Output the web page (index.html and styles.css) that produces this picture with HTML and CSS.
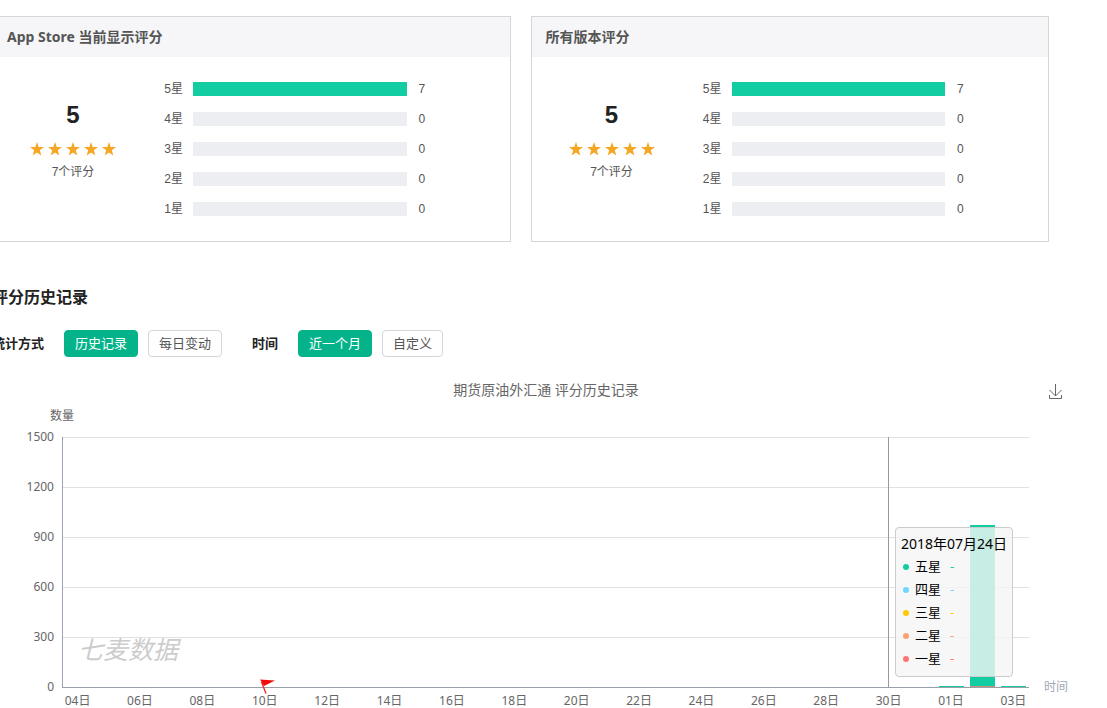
FILE: index.html
```
<!DOCTYPE html>
<html lang="zh-CN">
<head>
<meta charset="utf-8">
<title>评分历史记录</title>
<link rel="stylesheet" href="styles.css">
</head>
<body>
<svg class="sprite" aria-hidden="true">
  <symbol id="star" viewBox="0 0 14 14"><path d="M7 0L8.700 5H14L9.800 8.300L11.300 13.500L7 10.400L2.700 13.500L4.200 8.300L0 5H5.300Z"/></symbol>
</svg>
<main class="page">
  <div class="ratings">
    <section class="card">
      <h2 class="card-title">App Store 当前显示评分</h2>
      <div class="card-body">
        <div class="summary">
          <div class="score">5</div>
          <div class="stars" role="img" aria-label="5星">
            <svg><use href="#star"/></svg><svg><use href="#star"/></svg><svg><use href="#star"/></svg><svg><use href="#star"/></svg><svg><use href="#star"/></svg>
          </div>
          <div class="count">7个评分</div>
        </div>
        <ul class="levels">
          <li><span class="level">5星</span><span class="bar full"></span><span>7</span></li>
          <li><span class="level">4星</span><span class="bar"></span><span>0</span></li>
          <li><span class="level">3星</span><span class="bar"></span><span>0</span></li>
          <li><span class="level">2星</span><span class="bar"></span><span>0</span></li>
          <li><span class="level">1星</span><span class="bar"></span><span>0</span></li>
        </ul>
      </div>
    </section>
    <section class="card">
      <h2 class="card-title">所有版本评分</h2>
      <div class="card-body">
        <div class="summary">
          <div class="score">5</div>
          <div class="stars" role="img" aria-label="5星">
            <svg><use href="#star"/></svg><svg><use href="#star"/></svg><svg><use href="#star"/></svg><svg><use href="#star"/></svg><svg><use href="#star"/></svg>
          </div>
          <div class="count">7个评分</div>
        </div>
        <ul class="levels">
          <li><span class="level">5星</span><span class="bar full"></span><span>7</span></li>
          <li><span class="level">4星</span><span class="bar"></span><span>0</span></li>
          <li><span class="level">3星</span><span class="bar"></span><span>0</span></li>
          <li><span class="level">2星</span><span class="bar"></span><span>0</span></li>
          <li><span class="level">1星</span><span class="bar"></span><span>0</span></li>
        </ul>
      </div>
    </section>
  </div>

  <h1 class="section-title">评分历史记录</h1>

  <div class="filters">
    <div class="filter" role="group" aria-labelledby="mode-label">
      <span class="filter-label" id="mode-label">统计方式</span>
      <button class="option active" type="button">历史记录</button>
      <button class="option" type="button">每日变动</button>
    </div>
    <div class="filter" role="group" aria-labelledby="time-label">
      <span class="filter-label" id="time-label">时间</span>
      <button class="option active" type="button">近一个月</button>
      <button class="option" type="button">自定义</button>
    </div>
  </div>

  <section class="chart">
    <header class="chart-head">
      <h2 class="chart-title">期货原油外汇通 评分历史记录</h2>
      <button class="download" type="button" aria-label="下载">
        <svg viewBox="0 0 15 16"><path d="M7.500 0V12M1.500 6L7.500 12L13.500 6M1.500 11V14.500H13.500V11"/></svg>
      </button>
    </header>
    <div class="y-name">数量</div>
    <div class="chart-grid">
      <div class="y-axis"><span>1500</span><span>1200</span><span>900</span><span>600</span><span>300</span><span>0</span></div>
      <div class="plot">
        <div class="lines"><i></i><i></i><i></i><i></i><i></i></div>
        <div class="watermark">七麦数据</div>
        <div class="columns">
          <svg class="flag" viewBox="0 0 16 16" aria-hidden="true"><path fill="#f30b0b" d="M1 .5L16 1.500L5 7Z"/><path fill="none" stroke="#e22" stroke-width="1.300" d="M2.500 3L7 14.500"/></svg>
          <span class="pointer"></span>
          <span class="column first"></span>
          <span class="column tall"></span>
          <span class="column last"></span>
        </div>
        <div class="tooltip">
          <div class="tip-date">2018年07月24日</div>
          <div class="tip-row five"><i></i><span>五星</span><b>-</b></div>
          <div class="tip-row four"><i></i><span>四星</span><b>-</b></div>
          <div class="tip-row three"><i></i><span>三星</span><b>-</b></div>
          <div class="tip-row two"><i></i><span>二星</span><b>-</b></div>
          <div class="tip-row one"><i></i><span>一星</span><b>-</b></div>
        </div>
      </div>
      <div class="x-name">时间</div>
      <div class="x-axis">
        <span>04日</span><span>06日</span><span>08日</span><span>10日</span><span>12日</span><span>14日</span><span>16日</span><span>18日</span><span>20日</span><span>22日</span><span>24日</span><span>26日</span><span>28日</span><span>30日</span><span>01日</span><span>03日</span>
      </div>
    </div>
  </section>
</main>
</body>
</html>
```
FILE: styles.css
```
* {
  box-sizing: border-box;
}

body {
  margin: 0;
  overflow-x: hidden;
  background: #fff;
  color: #555;
  font: 12px/20px "Liberation Sans", "Noto Sans CJK SC", sans-serif;
}

h1, h2, ul {
  margin: 0;
  padding: 0;
}

button {
  font-family: inherit;
  cursor: pointer;
}

.sprite {
  display: none;
}

.page {
  margin-left: -8px;
  padding: 16px 7px 0 0;
}

/* Rating cards */
.ratings {
  display: grid;
  grid-template-columns: 1fr 1fr;
  gap: 20px;
  margin-right: 51px;
}

.card {
  border: 1px solid #d6d6d8;
}

.card-title {
  padding: 0 14px;
  background: #f6f6f9;
  font: bold 14px/40px "Noto Sans", "Noto Sans CJK SC", sans-serif;
}

.card-body {
  display: flex;
  padding: 17px 0;
}

.summary {
  display: flex;
  flex: 0 0 160px;
  flex-direction: column;
  align-items: center;
  padding-top: 26px;
}

.score {
  color: #222;
  font-size: 24px;
  font-weight: bold;
  line-height: 30px;
}

.stars {
  display: flex;
  gap: 4px;
  margin: 12px 0 6px;
}

.stars svg {
  width: 14px;
  height: 14px;
  fill: #f5a623;
}

.levels {
  flex: 1;
  list-style: none;
}

.levels li {
  display: grid;
  grid-template-columns: 30px 1fr 91px;
  align-items: center;
  height: 30px;
}

.level {
  text-align: right;
}

.bar {
  height: 14px;
  margin: 0 12px 0 10px;
  background: #edeef2;
}

.bar.full {
  background: #13cda2;
}

/* Section heading and filters */
.section-title {
  margin-top: 44px;
  color: #222;
  font-size: 16px;
  line-height: 24px;
}

.filters {
  display: flex;
  gap: 30px;
  margin-top: 20px;
}

.filter {
  display: flex;
  align-items: center;
  gap: 10px;
}

.filter-label {
  margin-right: 10px;
  color: #222;
  font-size: 13px;
  font-weight: bold;
}

.option {
  height: 27px;
  padding: 0 10px;
  border: 1px solid #d6d6d8;
  border-radius: 4px;
  background: #fff;
  color: #555;
  font-size: 13px;
  line-height: 20px;
}

.option.active {
  border-color: #04b38a;
  background: #04b38a;
  color: #fff;
}

/* Chart */
.chart {
  margin-top: 23px;
  color: #666;
  font-family: "Noto Sans", "Noto Sans CJK SC", sans-serif;
}

.chart-head {
  display: grid;
  align-items: center;
}

.chart-title,
.download {
  grid-area: 1 / 1;
}

.chart-title {
  justify-self: center;
  font-size: 14px;
  font-weight: normal;
  line-height: 20px;
}

.download {
  justify-self: end;
  height: 16px;
  margin: 4px 37px 0 0;
  padding: 0;
  border: 0;
  background: none;
}

.download svg {
  display: block;
  width: 15px;
  height: 16px;
  fill: none;
  stroke: #666;
}

.y-name {
  width: 140px;
  margin-top: 6px;
  text-align: center;
}

.chart-grid {
  display: grid;
  grid-template-columns: 70px 1fr 71px;
  margin-top: 11px;
}

.y-axis {
  display: flex;
  flex-direction: column;
  justify-content: space-between;
  margin: -10px 8px -9px 0;
  text-align: right;
}

.plot {
  position: relative;
  height: 251px;
  border-bottom: 1px solid #999fa9;
  border-left: 1px solid #99a5b5;
}

.lines,
.columns {
  position: absolute;
  inset: 0;
  display: grid;
}

.lines i {
  border-top: 1px solid #e0e1e3;
}

.columns {
  grid-template-columns: repeat(31, 1fr);
  grid-template-rows: 100%;
  align-items: end;
}

.watermark {
  position: absolute;
  bottom: 22px;
  left: 15px;
  color: #ccc;
  font-size: 25px;
  font-style: italic;
  line-height: 32px;
}

.flag {
  grid-area: 1 / 7;
  justify-self: center;
  width: 16px;
  height: 16px;
  margin: 0 -2px -8px 0;
}

.pointer {
  grid-area: 1 / 27;
  justify-self: center;
  width: 1px;
  height: 100%;
  background: #999;
}

.column {
  height: 1px;
  margin: 0 3px;
  background: #13cda2;
}

.column.first {
  grid-area: 1 / 29;
}

.column.tall {
  grid-area: 1 / 30;
  height: 162px;
  border-bottom: 1px solid #c69378;
}

.column.last {
  grid-area: 1 / 31;
}

.tooltip {
  position: absolute;
  right: 16px;
  bottom: 10px;
  padding: 4px 5px 6px;
  border: 1px solid #ccc;
  border-radius: 4px;
  background: rgba(245, 245, 245, .8);
  color: #000;
  font-size: 13px;
  line-height: 23px;
}

.tip-date {
  font-size: 14px;
}

.tip-row {
  display: flex;
  align-items: center;
}

.tip-row i {
  width: 6px;
  height: 6px;
  margin: 0 6px 0 2px;
  border-radius: 50%;
  background: currentColor;
}

.tip-row span {
  margin-right: 9px;
  color: #000;
}

.tip-row b {
  font-weight: normal;
}

.five { color: #13cda2; }
.four { color: #70d6ff; }
.three { color: #ffc800; }
.two { color: #ff9f73; }
.one { color: #ff7573; }

.x-name {
  align-self: end;
  margin: 0 0 -9px 15px;
  color: #a0a7b5;
}

/* A label under every second category; the last slot is a single one */
.x-axis {
  display: grid;
  grid-column: 2;
  grid-template-columns: repeat(15, 2fr) 1fr;
  margin-top: 5px;
  line-height: 15px;
  text-align: center;
  white-space: nowrap;
}

.x-axis span {
  width: 50%;
}

.x-axis span:last-child {
  width: 100%;
}
```
